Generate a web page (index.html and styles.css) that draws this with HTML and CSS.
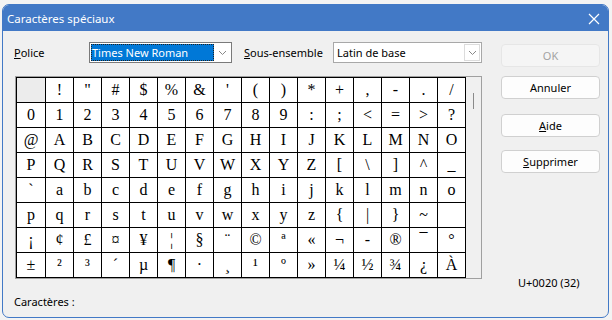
FILE: index.html
```html
<!DOCTYPE html>
<html lang="fr">
  <head>
    <meta charset="UTF-8" />
    <title>Caractères spéciaux</title>
    <link rel="stylesheet" href="styles.css">
  </head>
  <body>
    <div class="fenetre">
      <div class="titre">
        <span>Caractères spéciaux</span>
        <svg class="fermer" width="12" height="12" viewBox="0 0 12 12">
          <path d="M1 1 L11 11 M11 1 L1 11" stroke="#fff" stroke-width="1.2" fill="none" />
        </svg>
      </div>

      <div class="contenu">
        <div class="gauche">
          <div class="ligne-choix">
            <label class="lib-police"><u>P</u>olice</label>
            <div class="combo combo-police">
              <span class="valeur selection">Times New Roman</span>
              <span class="fleche">
                <svg width="9" height="6" viewBox="0 0 9 6"><path d="M1 1 L4.5 4.5 L8 1" stroke="#888" fill="none" /></svg>
              </span>
            </div>
            <label class="lib-sous"><u>S</u>ous-ensemble</label>
            <div class="combo combo-sous">
              <span class="valeur">Latin de base</span>
              <span class="fleche bouton-fleche">
                <svg width="9" height="6" viewBox="0 0 9 6"><path d="M1 1 L4.5 4.5 L8 1" stroke="#888" fill="none" /></svg>
              </span>
            </div>
          </div>

          <div class="tableau">
            <div class="grille" id="grille"></div>
            <div class="defil"><div class="curseur"></div></div>
          </div>

          <div class="caracteres">Caractères :</div>
        </div>

        <div class="droite">
          <button class="btn ok" disabled>OK</button>
          <button class="btn annuler">Annuler</button>
          <button class="btn aide"><u>A</u>ide</button>
          <button class="btn supprimer"><u>S</u>upprimer</button>
          <div class="code">U+0020 (32)</div>
        </div>
      </div>
    </div>

    <script>
      // 128 cases : 0x20 -> 0x7F puis 0xA1 -> 0xC0
      const grille = document.getElementById("grille");
      const codes = [];
      for (let c = 0x20; c <= 0x7f; c++) codes.push(c);
      for (let c = 0xa1; c <= 0xc0; c++) codes.push(c);

      codes.forEach((c, i) => {
        const cellule = document.createElement("div");
        cellule.className = "cellule";
        if (i === 0) cellule.classList.add("active");
        let txt = String.fromCharCode(c);
        if (c === 0x7f || c === 0x20) txt = "";
        if (c === 0xad) txt = "-";
        cellule.textContent = txt;
        grille.appendChild(cellule);
      });
    </script>
  </body>
</html>
```

FILE: styles.css
```css
body {
  margin: 0;
  background: #f3f3f3;
  font-family: "Segoe UI", "Noto Sans", sans-serif;
  font-size: 11px;
  color: #000;
}

.fenetre {
  margin: 4px 3px 0 2px;
  height: 312px;
  border: 1px solid #4279c6;
  border-radius: 7px;
  background: #f0f0f0;
  overflow: hidden;
  display: flex;
  flex-direction: column;
}

.titre {
  height: 26px;
  background: #4279c6;
  color: white;
  font-size: 11.5px;
  display: flex;
  align-items: center;
  justify-content: space-between;
  padding: 0 8px 0 4px;
}

.fermer {
  margin-top: 1px;
}

.contenu {
  display: flex;
  padding: 11px 0 0 11px;
  flex: 1;
}

.gauche {
  width: 468px;
  flex-shrink: 0;
  display: flex;
  flex-direction: column;
}

.ligne-choix {
  display: flex;
  align-items: center;
  height: 21px;
}

.ligne-choix > * {
  flex-shrink: 0;
}

.lib-police {
  width: 75px;
}

.lib-sous {
  margin-left: 12px;
  width: 89px;
  white-space: nowrap;
}

.combo {
  height: 21px;
  box-sizing: border-box;
  background: white;
  display: flex;
  align-items: center;
}

.combo-police {
  width: 143px;
  border: 1px solid #7a7a7a;
  padding: 1px;
}

.combo-sous {
  width: 149px;
  border: 1px solid #a8a8a8;
  padding-left: 2px;
}

.valeur {
  flex: 1;
  height: 100%;
  display: flex;
  align-items: center;
  padding-left: 1px;
}

.selection {
  background: #0078d7;
  color: white;
  outline: 1px dotted #222;
  outline-offset: -1px;
}

.fleche {
  width: 16px;
  height: 100%;
  display: flex;
  align-items: center;
  justify-content: center;
}

.bouton-fleche {
  height: 17px;
  border: 1px solid #dcdcdc;
  margin-right: 1px;
  box-sizing: border-box;
}

.tableau {
  margin-top: 13px;
  margin-left: 1px;
  width: 467px;
  height: 203px;
  box-sizing: border-box;
  border: 1px solid #a0a0a0;
  display: flex;
  background: #f0f0f0;
}

.grille {
  display: grid;
  grid-template-columns: 29px repeat(15, 28px);
  grid-auto-rows: 25px;
  border-left: 1px solid #000;
  border-top: 1px solid #000;
  background: white;
  align-self: flex-start;
}

.cellule {
  border-right: 1px solid #000;
  border-bottom: 1px solid #000;
  display: flex;
  align-items: center;
  justify-content: center;
  font-family: "Liberation Serif", serif;
  font-size: 16px;
  line-height: 1;
}

.cellule.active {
  background: #ececec;
}

.defil {
  flex: 1;
  position: relative;
}

.curseur {
  position: absolute;
  left: 7px;
  top: 16px;
  width: 1px;
  height: 16px;
  background: #8a8a8a;
}

.caracteres {
  margin-top: 15px;
}

.droite {
  margin-left: 19px;
  width: 99px;
  display: flex;
  flex-direction: column;
  padding-top: 2px;
}

.btn {
  height: 23px;
  font-family: inherit;
  font-size: 11px;
  background: #fdfdfd;
  border: 1px solid #d0d0d0;
  border-radius: 4px;
  color: #000;
  padding: 0;
}

.ok {
  background: #f5f5f5;
  border-color: #e6e6e6;
  color: #a3a3a3;
}

.annuler {
  margin-top: 9px;
}

.aide {
  margin-top: 15px;
}

.supprimer {
  margin-top: 13px;
}

.code {
  margin-top: auto;
  margin-bottom: 27px;
  padding-left: 17px;
}
```
